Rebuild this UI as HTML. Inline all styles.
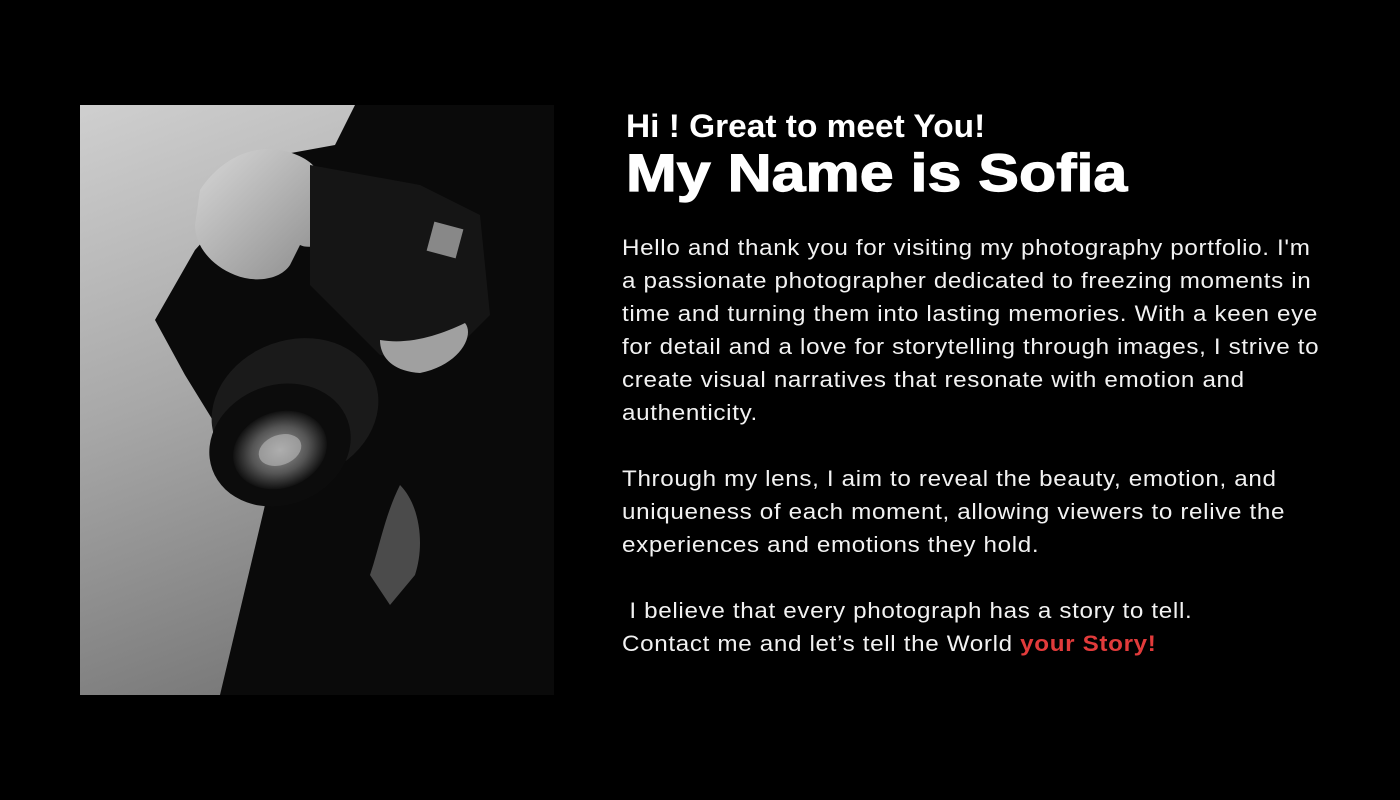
<!DOCTYPE html>
<html><head><meta charset="utf-8"><style>
html,body{margin:0;padding:0;background:#000;width:1400px;height:800px;overflow:hidden}
.photo{position:absolute;left:80px;top:105px;width:474px;height:590px}
.h1{position:absolute;left:626px;top:108px;font:bold 32px "Liberation Sans",sans-serif;color:#fff;white-space:nowrap;line-height:36px;transform:scaleX(1.045);transform-origin:left}
.h2{position:absolute;left:626px;top:144px;font:bold 53px "Liberation Sans",sans-serif;color:#fff;white-space:nowrap;line-height:60px;transform:scaleX(1.15);transform-origin:left;-webkit-text-stroke:1.2px #fff}
.body{position:absolute;left:622px;top:231px;font:22px "Liberation Sans",sans-serif;color:#f2f2f2;line-height:33px;white-space:nowrap;letter-spacing:0.6px;transform:scaleX(1.1);transform-origin:left}
.red{color:#e23b3b;font-weight:bold}
</style></head><body>
<svg class="photo" viewBox="0 0 474 590" xmlns="http://www.w3.org/2000/svg">
<defs>
<linearGradient id="bg" x1="0" y1="0" x2="0.3" y2="1"><stop offset="0" stop-color="#cfcfcf"/><stop offset="0.5" stop-color="#a8a8a8"/><stop offset="1" stop-color="#7a7a7a"/></linearGradient>
<linearGradient id="hand" x1="0" y1="0" x2="1" y2="1"><stop offset="0" stop-color="#d8d8d8"/><stop offset="1" stop-color="#8a8a8a"/></linearGradient>
<radialGradient id="glass" cx="0.5" cy="0.5" r="0.5"><stop offset="0" stop-color="#9a9a9a"/><stop offset="0.6" stop-color="#555"/><stop offset="1" stop-color="#111"/></radialGradient>
</defs>
<rect width="474" height="590" fill="url(#bg)"/>
<polygon points="275,0 474,0 474,590 140,590 185,400 105,270 75,215 115,145 200,50 255,40" fill="#0a0a0a"/>
<path d="M120,85 C140,55 170,40 200,45 C225,50 235,60 240,70 L250,120 C250,140 230,145 220,140 L210,160 C200,175 175,178 155,170 C130,160 115,140 115,120 Z" fill="url(#hand)"/>
<path d="M230,60 L340,80 L400,110 L410,210 L360,260 L300,250 L230,180 Z" fill="#151515"/>
<rect x="350" y="120" width="30" height="30" fill="#888" transform="rotate(15 365 135)"/>
<path d="M300,235 C330,240 360,230 385,218 C395,230 380,260 340,268 C310,266 300,250 300,235 Z" fill="#a0a0a0"/>
<ellipse cx="215" cy="305" rx="85" ry="70" fill="#1a1a1a" transform="rotate(-20 215 305)"/>
<ellipse cx="200" cy="340" rx="72" ry="60" fill="#0c0c0c" transform="rotate(-20 200 340)"/>
<ellipse cx="200" cy="345" rx="48" ry="38" fill="url(#glass)" transform="rotate(-20 200 345)"/>
<ellipse cx="200" cy="345" rx="22" ry="15" fill="#bbb" opacity="0.6" transform="rotate(-20 200 345)"/>
<path d="M320,380 C340,400 345,440 335,470 L310,500 L290,470 C300,440 305,410 320,380 Z" fill="#777" opacity="0.6"/>
</svg>
<div class="h1">Hi ! Great to meet You!</div>
<div class="h2">My Name is Sofia</div>
<div class="body">Hello and thank you for visiting my photography portfolio. I'm<br>a passionate photographer dedicated to freezing moments in<br>time and turning them into lasting memories. With a keen eye<br>for detail and a love for storytelling through images, I strive to<br>create visual narratives that resonate with emotion and<br>authenticity.<br><br>Through my lens, I aim to reveal the beauty, emotion, and<br>uniqueness of each moment, allowing viewers to relive the<br>experiences and emotions they hold.<br><br>&nbsp;I believe that every photograph has a story to tell.<br>Contact me and let’s tell the World <span class="red">your Story!</span></div>
</body></html>
